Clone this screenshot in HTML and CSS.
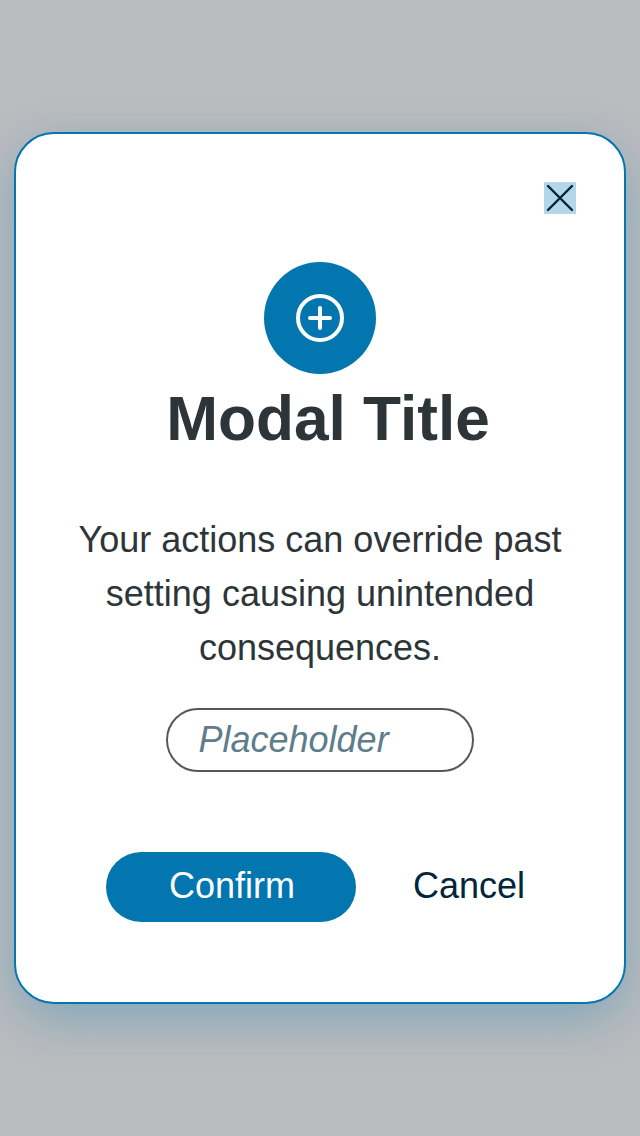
FILE: index.html
```html
<!DOCTYPE html>
<html lang="en">
<head>
<meta charset="utf-8">
<title>Modal</title>
<link rel="stylesheet" href="styles.css">
</head>
<body>
<main class="backdrop">
  <section class="modal" role="dialog" aria-labelledby="title">
    <button class="close" aria-label="Close">
      <svg width="32" height="32" viewBox="0 0 32 32" fill="none" stroke="#012639" stroke-width="2.4" stroke-linecap="round"><path d="M4 4L28 28M28 4L4 28"/></svg>
    </button>
    <div class="badge">
      <svg width="48" height="48" viewBox="0 0 48 48" fill="none" stroke="#fff" stroke-width="4" stroke-linecap="round"><circle cx="24" cy="24" r="22"/><path d="M24 14V34M14 24H34"/></svg>
    </div>
    <h1 class="title" id="title">Modal Title</h1>
    <p class="message">Your actions can override past setting causing unintended consequences.</p>
    <input class="field" type="text" placeholder="Placeholder">
    <div class="actions">
      <button class="button confirm">Confirm</button>
      <button class="button cancel">Cancel</button>
    </div>
  </section>
</main>
</body>
</html>
```
FILE: styles.css
```css
* { box-sizing: border-box; }
body { margin: 0; font-family: "Liberation Sans", Arial, sans-serif; background: #bbbcbe; }
.backdrop { height: 1136px; padding: 132px 14px; overflow: hidden; }
.modal {
  display: flex; flex-direction: column; align-items: center;
  height: 872px; padding: 48px; background: #fff;
  border: 2px solid #0376b0; border-radius: 40px;
  box-shadow: 0 16px 52px rgba(3, 118, 176, .31);
}
.close { align-self: flex-end; width: 32px; height: 32px; padding: 0; border: 0; background: #b3d6e8; }
.close svg, .badge svg { display: block; }
.badge {
  display: flex; align-items: center; justify-content: center;
  width: 112px; height: 112px; margin-top: 48px; border-radius: 50%; background: #0376b0;
}
.title { margin: 9px 0 0; padding-left: 16px; font-size: 62.2px; line-height: 72px; color: #2d3538; white-space: nowrap; }
.message { width: 500px; margin: 58px 0 0; font-size: 36px; line-height: 54px; text-align: center; color: #2d3538; }
.field {
  width: 308px; height: 64px; margin: 33px 0 0; padding: 0 31px 0 30.5px;
  border: 2px solid #50595c; border-radius: 32px; background: #fff;
  font: italic 36px "Liberation Sans", Arial, sans-serif;
}
.field::placeholder { color: #5e7d8b; opacity: 1; }
.actions { display: flex; align-self: stretch; margin-top: 80px; padding-left: 42px; }
.button { height: 70px; border: 0; padding: 0 0 2px; font: 36px "Liberation Sans", Arial, sans-serif; }
.confirm { width: 250px; padding-left: 2px; border-radius: 35px; background: #0376b0; color: #fff; }
.cancel { margin-left: 57px; background: none; color: #012639; }
```
